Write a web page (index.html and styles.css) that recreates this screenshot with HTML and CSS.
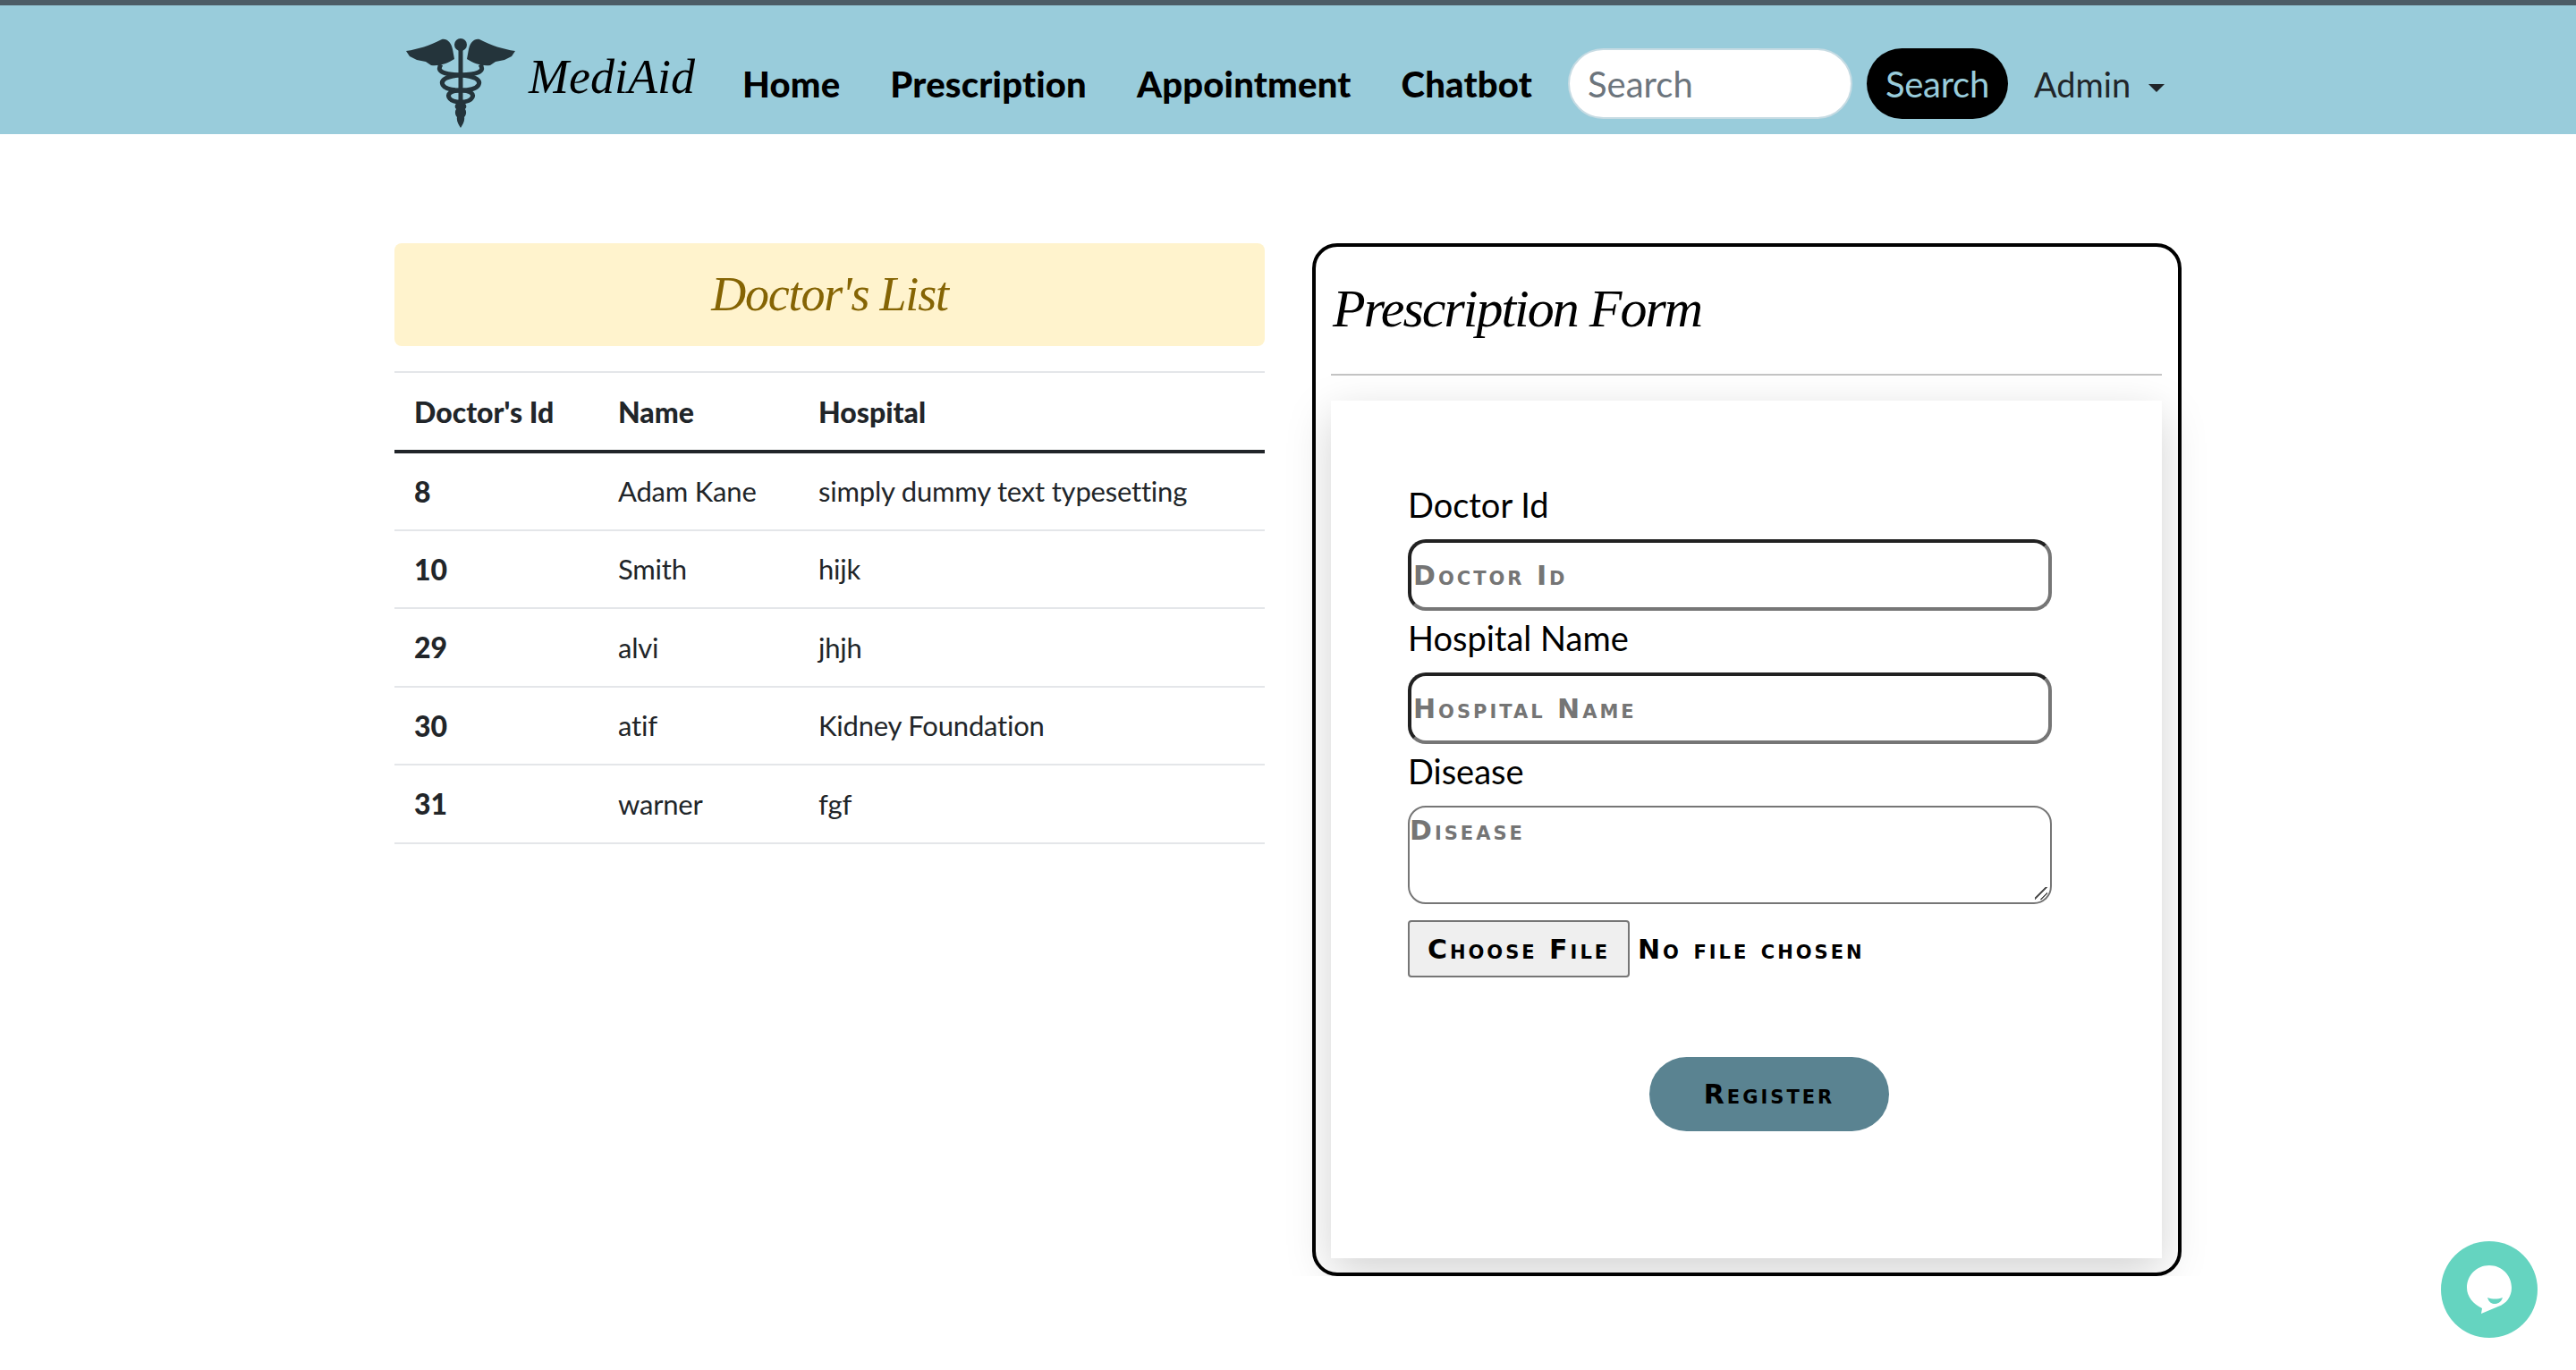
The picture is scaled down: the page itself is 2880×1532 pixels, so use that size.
FILE: index.html
```html
<!DOCTYPE html>
<html>
<head>
    <title>MediAid</title>
    <link rel="stylesheet" href="styles.css">
</head>
<body>
    <nav class="navbar">
        <svg class="logo" viewBox="0 0 122 100" aria-hidden="true">
            <path d="M0 14 C14 12 26 8 40 1 C46 0 50 4 52 12 L54 23 C46 28 38 31 28 30 L22 26 L12 24 L4 20 Z" fill="#24343b"/>
            <path d="M122 14 C108 12 96 8 82 1 C76 0 72 4 70 12 L68 23 C76 28 84 31 94 30 L100 26 L110 24 L118 20 Z" fill="#24343b"/>
            <circle cx="61" cy="7" r="7" fill="#24343b"/>
            <path d="M61 12 V86" stroke="#24343b" stroke-width="5"/>
            <path d="M39 29 C33 38 44 40 61 41 C76 42 84 46 81 52 C78 57 70 58 61 58 C50 58 46 62 48 66 C50 70 56 71 61 71" fill="none" stroke="#24343b" stroke-width="5"/>
            <path d="M83 29 C89 38 78 40 61 41 C46 42 38 46 41 52 C44 57 52 58 61 58 C72 58 76 62 74 66 C72 70 66 71 61 71" fill="none" stroke="#24343b" stroke-width="5"/>
            <path d="M61 69 C67 72 69 76 66 79 C68 82 67 86 65 88 C66 92 63 97 61 100 C59 97 56 92 57 88 C55 86 54 82 56 79 C53 76 55 72 61 69 Z" fill="#24343b"/>
        </svg>
        <a class="brand" href="#">MediAid</a>
        <ul class="nav-links">
            <li><a href="#">Home</a></li>
            <li><a href="#">Prescription</a></li>
            <li><a href="#">Appointment</a></li>
            <li><a href="#">Chatbot</a></li>
        </ul>
        <form class="search">
            <input class="search-input" type="text" placeholder="Search">
            <button class="search-btn" type="button">Search</button>
        </form>
        <a class="admin" href="#">Admin <span class="caret"></span></a>
    </nav>

    <main class="content">
        <section class="doctors">
            <div class="alert-title">Doctor's List</div>
            <table class="doc-table">
                <colgroup>
                    <col class="col-id">
                    <col class="col-name">
                    <col>
                </colgroup>
                <thead>
                    <tr><th>Doctor's Id</th><th>Name</th><th>Hospital</th></tr>
                </thead>
                <tbody>
                    <tr><th>8</th><td>Adam Kane</td><td>simply dummy text typesetting</td></tr>
                    <tr><th>10</th><td>Smith</td><td>hijk</td></tr>
                    <tr><th>29</th><td>alvi</td><td>jhjh</td></tr>
                    <tr><th>30</th><td>atif</td><td>Kidney Foundation</td></tr>
                    <tr><th>31</th><td>warner</td><td>fgf</td></tr>
                </tbody>
            </table>
        </section>

        <section class="panel">
            <h2 class="panel-title">Prescription Form</h2>
            <hr class="divider">
            <form class="card">
                <label for="doctor">Doctor Id</label>
                <input class="field" id="doctor" type="text" placeholder="Doctor Id">
                <label for="hospital">Hospital Name</label>
                <input class="field" id="hospital" type="text" placeholder="Hospital Name">
                <label for="disease">Disease</label>
                <textarea class="area" id="disease" placeholder="Disease"></textarea>
                <div class="file-row">
                    <button class="file-btn" type="button">Choose File</button>
                    <span class="file-name">No file chosen</span>
                </div>
                <button class="register" type="button">Register</button>
            </form>
        </section>
    </main>

    <div class="chat">
        <svg viewBox="0 0 108 108" width="108" height="108" aria-hidden="true">
            <circle cx="54" cy="54" r="54" fill="#65d4c0"/>
            <path d="M54 27 C68 27 79 38 79 52 C79 62 73 70 64 73 L45 81 L46 75 C36 70 29 62 29 52 C29 38 40 27 54 27 Z" fill="#fff"/>
            <path d="M52 63 C58 65 63 65 69 63 C67 69 63 70 60 70 C57 70 54 69 52 63 Z" fill="#65d4c0"/>
        </svg>
    </div>
</body>
</html>
```

FILE: styles.css
```css
body {
    margin: 0;
    background-color: #fff;
    color: #212529;
    font-family: "Lato", "Noto Sans", sans-serif;
    font-size: 32px;
}

.navbar {
    display: flex;
    align-items: center;
    box-sizing: border-box;
    height: 150px;
    padding: 37px 0 7px 454px;
    background-color: #99ccdb;
    border-top: 6px solid #4c5c66;
}

.logo {
    width: 122px;
    height: 100px;
    flex: none;
}

.brand {
    margin-left: 15px;
    margin-top: -14px;
    color: #000;
    font-family: "Liberation Serif", serif;
    font-style: italic;
    font-size: 54px;
    text-decoration: none;
}

.nav-links {
    display: flex;
    gap: 56px;
    margin: 2px 0 0 53px;
    padding: 0;
    list-style: none;
}

.nav-links a {
    color: #000;
    font-size: 40px;
    font-weight: 900;
    letter-spacing: 0.2px;
    text-decoration: none;
}

.search {
    display: flex;
    gap: 16px;
    margin-left: 40px;
}

.search-input {
    box-sizing: border-box;
    width: 318px;
    height: 79px;
    padding: 2px 20px 0;
    border: 2px solid #c6dbe3;
    border-radius: 40px;
    background: #fff;
    font-family: inherit;
    font-size: 40px;
}

.search-input::placeholder {
    color: #6c757d;
}

.search-btn {
    box-sizing: border-box;
    width: 158px;
    height: 79px;
    padding: 2px 0 0;
    border: none;
    border-radius: 40px;
    background: #000;
    color: #99ccdb;
    font-family: inherit;
    font-size: 40px;
    letter-spacing: -0.3px;
}

.admin {
    margin-left: 29px;
    margin-top: 2px;
    color: #212529;
    font-size: 38px;
    text-decoration: none;
}

.caret {
    display: inline-block;
    margin-left: 10px;
    vertical-align: 6px;
    border-top: 9px solid #212529;
    border-left: 9px solid transparent;
    border-right: 9px solid transparent;
}

.content {
    display: grid;
    grid-template-columns: 973px 972px;
    gap: 53px;
    align-items: start;
    margin-left: 441px;
    padding-top: 122px;
}

.alert-title {
    height: 115px;
    line-height: 115px;
    border-radius: 8px;
    background-color: #fff3cd;
    color: #856404;
    font-family: "Liberation Serif", serif;
    font-style: italic;
    font-size: 54px;
    letter-spacing: -1.2px;
    text-align: center;
}

.doc-table {
    width: 100%;
    margin-top: 28px;
    border-collapse: collapse;
    table-layout: fixed;
}

.col-id {
    width: 228px;
}

.col-name {
    width: 224px;
}

.doc-table th,
.doc-table td {
    height: 87.5px;
    padding: 0 22px;
    border-top: 2px solid #e4e6e9;
    text-align: left;
    box-sizing: border-box;
}

.doc-table td {
    font-size: 31px;
    letter-spacing: -0.2px;
}

.doc-table thead th {
    height: 89px;
    border-bottom: 4px solid #212529;
}

.doc-table th {
    font-weight: 900;
}

.doc-table tbody tr:last-child th,
.doc-table tbody tr:last-child td {
    border-bottom: 2px solid #e4e6e9;
}

.panel {
    box-sizing: border-box;
    height: 1155px;
    padding: 0 18px 16px 17px;
    border: 4px solid #000;
    border-radius: 28px;
}

.panel-title {
    height: 142px;
    margin: 0;
    padding-left: 2px;
    color: #000;
    font-family: "Liberation Serif", serif;
    font-style: italic;
    font-weight: 400;
    font-size: 60px;
    letter-spacing: -2px;
    line-height: 138px;
}

.divider {
    height: 2px;
    margin: 0;
    border: none;
    background-color: #c4c4c4;
}

.card {
    box-sizing: border-box;
    height: 959px;
    margin-top: 28px;
    padding: 92px 0 0 86px;
    background: #fff;
    box-shadow: 0 16px 48px rgba(0, 0, 0, 0.175);
}

.card label {
    display: block;
    height: 50px;
    color: #000;
    font-size: 38px;
    line-height: 48px;
}

.field,
.area {
    display: block;
    box-sizing: border-box;
    width: 720px;
    margin: 0;
    padding: 0 2px;
    background: #fff;
    color: #000;
    font-family: "DejaVu Sans", sans-serif;
    font-variant: small-caps;
    font-weight: 700;
    font-size: 30px;
    letter-spacing: 3px;
}

.field::placeholder,
.area::placeholder {
    color: #757575;
}

.field {
    height: 80px;
    margin: 13px 0 6px;
    border: 4px solid;
    border-color: #212121 #767676 #767676 #212121;
    border-radius: 20px;
}

.area {
    height: 110px;
    margin-top: 13px;
    padding: 8px 0;
    border: 2px solid #767676;
    border-radius: 20px;
    resize: none;
    background: linear-gradient(135deg, transparent 40%, #555 40%, #555 50%, transparent 50%, transparent 68%, #555 68%, #555 78%, transparent 78%) no-repeat right 3px bottom 3px / 14px 14px #fff;
}

.file-row {
    display: flex;
    align-items: center;
    gap: 9px;
    margin-top: 18px;
    color: #000;
    font-family: "DejaVu Sans", sans-serif;
    font-variant: small-caps;
    font-weight: 700;
    font-size: 30px;
    letter-spacing: 3px;
}

.file-btn {
    box-sizing: border-box;
    width: 248px;
    height: 64px;
    padding: 0;
    border: 2px solid #767676;
    border-radius: 4px;
    background: #efefef;
    color: #000;
    font: inherit;
    font-variant: small-caps;
    letter-spacing: inherit;
}

.register {
    display: block;
    box-sizing: border-box;
    width: 268px;
    height: 83px;
    margin: 89px 0 0 270px;
    padding: 0;
    border: none;
    border-radius: 42px;
    background: #5a8391;
    color: #000;
    font-family: "DejaVu Sans", sans-serif;
    font-variant: small-caps;
    font-weight: 700;
    font-size: 30px;
    letter-spacing: 3px;
}

.chat {
    position: fixed;
    left: 2729px;
    top: 1388px;
    width: 108px;
    height: 108px;
}
```
